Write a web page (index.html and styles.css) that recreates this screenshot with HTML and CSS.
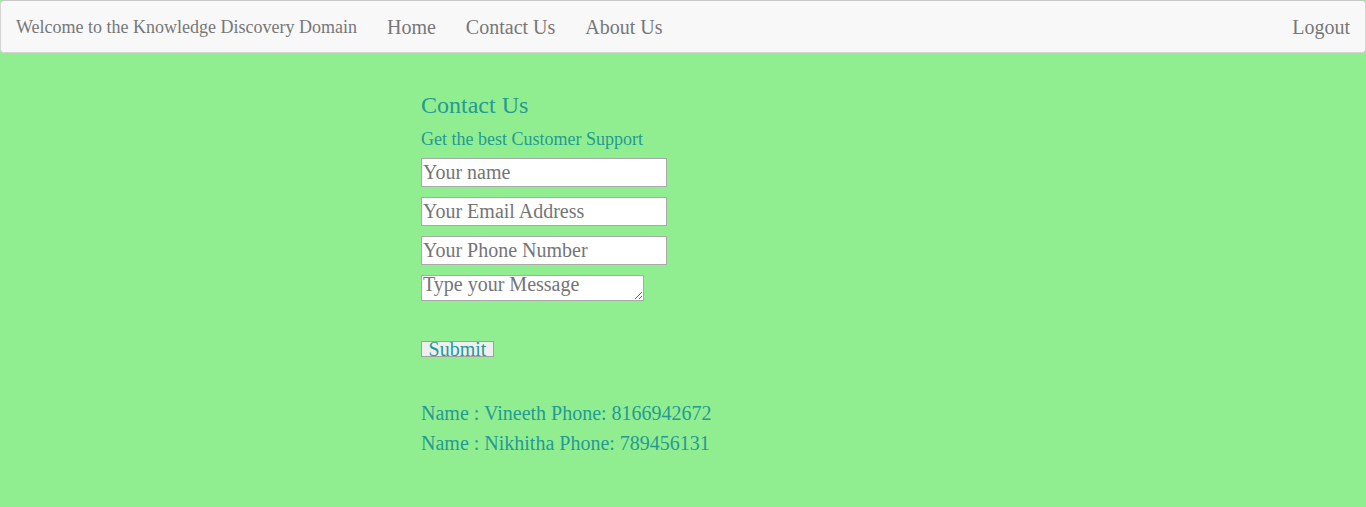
FILE: index.html
```html
<!DOCTYPE html>
<html>
<head>
<meta charset="utf-8">
<link rel="stylesheet" href="styles.css">
</head>
<body>
<nav class="navbar">
  <div class="nav-left">
    <span class="brand">Welcome to the Knowledge Discovery Domain</span>
    <a class="nav-link" href="#">Home</a>
    <a class="nav-link" href="#">Contact Us</a>
    <a class="nav-link" href="#">About Us</a>
  </div>
  <a class="nav-link" href="#">Logout</a>
</nav>
<main class="content">
  <h3 class="title">Contact Us</h3>
  <p class="subtitle">Get the best Customer Support</p>
  <form class="form">
    <input class="field" type="text" placeholder="Your name">
    <input class="field" type="text" placeholder="Your Email Address">
    <input class="field" type="text" placeholder="Your Phone Number">
    <textarea class="message" rows="1" placeholder="Type your Message"></textarea>
    <button class="submit" type="button">Submit</button>
  </form>
  <div class="contacts">
    <p class="contact">Name : Vineeth Phone: 8166942672</p>
    <p class="contact">Name : Nikhitha Phone: 789456131</p>
  </div>
</main>
</body>
</html>
```

FILE: styles.css
```css
html, body {
  margin: 0;
  padding: 0;
}
body {
  background: #90ee90;
  font-family: "Liberation Serif", "Times New Roman", serif;
  height: 507px;
  overflow: hidden;
}
.navbar {
  display: flex;
  justify-content: space-between;
  align-items: center;
  height: 50px;
  box-sizing: content-box;
  padding-top: 1px;
  background: #f8f8f8;
  border: 1px solid #d4d4d4;
  border-top-color: #c8c8c8;
  border-radius: 4px;
}
.nav-left {
  display: flex;
  align-items: center;
}
.brand {
  font-size: 18px;
  color: #777;
  padding: 0 15px;
}
.nav-link {
  font-size: 20px;
  color: #777;
  text-decoration: none;
  padding: 0 15px;
}
.content {
  padding-left: 421px;
  padding-top: 37px;
  color: #259a94;
}
.title {
  font-size: 24px;
  font-weight: normal;
  margin: 0;
  line-height: 30px;
}
.subtitle {
  font-size: 18px;
  margin: 9px 0 0 0;
  line-height: 20px;
}
.form {
  display: flex;
  flex-direction: column;
  align-items: flex-start;
  margin-top: 9px;
}
.field {
  width: 246px;
  height: 29px;
  box-sizing: border-box;
  font-family: "Liberation Serif", "Times New Roman", serif;
  font-size: 20px;
  border: 1px solid #a9a9a9;
  padding: 0 1px;
  margin: 0 0 10px 0;
  background: #fff;
  outline: none;
}
.field::placeholder, .message::placeholder {
  color: #757575;
}
.message {
  width: 223px;
  height: 26px;
  box-sizing: border-box;
  font-family: "Liberation Serif", "Times New Roman", serif;
  font-size: 20px;
  line-height: 17px;
  border: 1px solid #a9a9a9;
  padding: 0 1px;
  margin: 0;
  background: #fff;
}
.submit {
  margin-top: 40px;
  width: 73px;
  height: 16px;
  box-sizing: border-box;
  padding: 0;
  font-family: "Liberation Serif", "Times New Roman", serif;
  font-size: 20px;
  line-height: 14px;
  color: #259a94;
  background: #efefef;
  border: 1px solid #a0a0a0;
  border-radius: 0;
  overflow: visible;
  display: flex;
  justify-content: center;
  align-items: flex-start;
}
.contacts {
  margin-top: 41px;
}
.contact {
  font-size: 20px;
  margin: 0;
  line-height: 30px;
}
```
